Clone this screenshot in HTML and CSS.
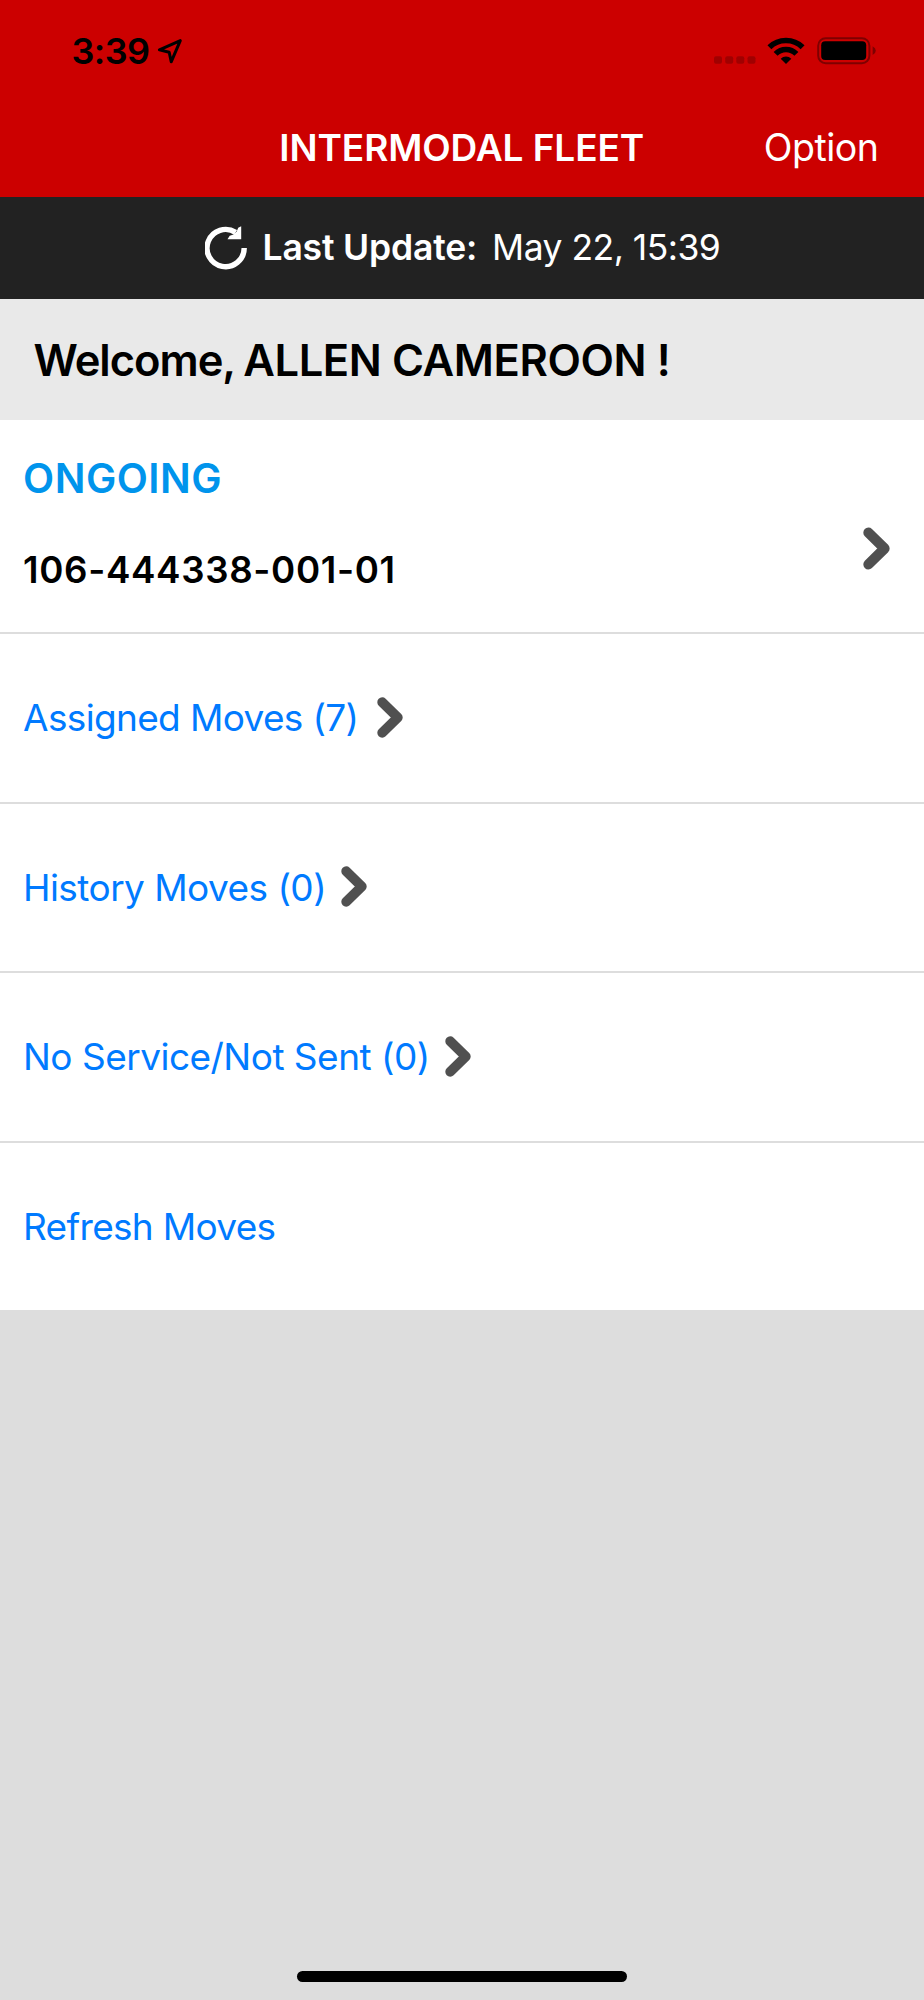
FILE: index.html
```html
<!DOCTYPE html>
<html lang="en">
<head>
<meta charset="utf-8">
<title>Intermodal Fleet</title>
<link rel="stylesheet" href="styles.css">
</head>
<body>
<main class="screen">
  <div class="status">
    <div class="status-left">
      <span class="time">3:39</span>
      <svg class="location" width="26" height="26" viewBox="0 0 26 26"><path d="M23.3 2.6L2.4 11.9L12.2 14.3L14.2 23.8Z" fill="none" stroke="#000" stroke-width="3" stroke-linejoin="round"/></svg>
    </div>
    <div class="status-right">
      <svg class="signal" width="42" height="8" viewBox="0 0 42 8" fill="#a00000"><rect x="0" y="0.3" width="8" height="7.4" rx="2"/><rect x="11.2" y="0.3" width="8" height="7.4" rx="2"/><rect x="22.3" y="0.3" width="8" height="7.4" rx="2"/><rect x="33.5" y="0.3" width="8" height="7.4" rx="2"/></svg>
      <svg class="wifi" width="38" height="28" viewBox="0 0 38 28"><g fill="none" stroke="#000" stroke-width="5.6"><path d="M2.4 10.2A23.8 23.8 0 0 1 35.6 10.2"/><path d="M8.6 16.9A14.6 14.6 0 0 1 29.4 16.9"/></g><path d="M19 27L13.7 21.7A7.5 7.5 0 0 1 24.3 21.7Z"/></svg>
      <svg class="battery" width="60" height="28" viewBox="0 0 60 28"><rect x="1.2" y="1.2" width="51.2" height="25" rx="7.5" fill="none" stroke="#7e0000" stroke-width="2"/><rect x="4.2" y="4.3" width="45" height="18.8" rx="4"/><path d="M55.6 9.3Q58.8 11 58.8 13.7T55.6 18.1Z" fill="#7e0000"/></svg>
    </div>
  </div>
  <header class="nav">
    <span></span>
    <h1 class="title">INTERMODAL FLEET</h1>
    <span class="option">Option</span>
  </header>
  <div class="update">
    <svg class="reload" width="43" height="44" viewBox="0 0 43 44"><path d="M39.2 22.1A18.6 18.6 0 1 1 30.6 6.4" fill="none" stroke="#fff" stroke-width="5.4"/><path d="M36.2 0.2V13.3H22.5L24.7 9.8L28.5 8.6L31.7 5.4L33.2 1.8Z" fill="#fff"/></svg>
    <span class="update-label">Last Update:</span>
    <span class="update-value">May 22, 15:39</span>
  </div>
  <div class="welcome"><span class="greeting">Welcome,</span><span class="name">ALLEN CAMEROON !</span></div>
  <section class="ongoing">
    <div class="ongoing-text">
      <div class="ongoing-title">ONGOING</div>
      <div class="ongoing-number">106-444338-001-01</div>
    </div>
    <svg class="chevron" width="28" height="43" viewBox="0 0 27 41"><path d="M5.2 5.2L20.8 20.5L5.2 35.8" fill="none" stroke="#505050" stroke-width="9.8" stroke-linecap="round" stroke-linejoin="round"/></svg>
  </section>
  <nav class="list">
    <a class="row"><span class="assigned">Assigned Moves (7)</span><svg class="chevron" width="27" height="41" viewBox="0 0 27 41"><path d="M5.2 5.2L20.8 20.5L5.2 35.8" fill="none" stroke="#505050" stroke-width="9.8" stroke-linecap="round" stroke-linejoin="round"/></svg></a>
    <a class="row"><span class="history">History Moves (0)</span><svg class="chevron" width="27" height="41" viewBox="0 0 27 41"><path d="M5.2 5.2L20.8 20.5L5.2 35.8" fill="none" stroke="#505050" stroke-width="9.8" stroke-linecap="round" stroke-linejoin="round"/></svg></a>
    <a class="row"><span class="unsent">No Service/Not Sent (0)</span><svg class="chevron" width="27" height="41" viewBox="0 0 27 41"><path d="M5.2 5.2L20.8 20.5L5.2 35.8" fill="none" stroke="#505050" stroke-width="9.8" stroke-linecap="round" stroke-linejoin="round"/></svg></a>
    <a class="row"><span class="refresh">Refresh Moves</span></a>
  </nav>
  <div class="home"></div>
</main>
</body>
</html>
```
FILE: styles.css
```css
* { box-sizing: border-box; }
body { margin: 0; font-family: Inter, "Liberation Sans", sans-serif; color: #000; }
svg { display: block; flex: none; }
span, a, h1 { white-space: nowrap; }

.screen { display: flex; flex-direction: column; width: 924px; height: 2000px; background: #ddd; overflow: hidden; }

.status { display: flex; justify-content: space-between; align-items: center; height: 98px; padding: 4px 47px 0 71.5px; background: #c00; }
.status-left, .status-right { display: flex; align-items: center; }
.time { font-size: 36px; font-weight: 600; letter-spacing: -0.6px; }
.location { margin: -1px 0 0 7.5px; }
.signal { margin: 17px 11px 0 0; }
.wifi { margin-right: 12px; }

.nav { display: grid; grid-template-columns: 1fr auto 1fr; align-items: center; height: 98.5px; padding: 0 45.5px 0 45px; background: #c00; color: #fff; }
.title { margin: 0; font-size: 37px; font-weight: 600; letter-spacing: -0.08px; }
.option { justify-self: end; font-size: 37.5px; font-weight: 400; letter-spacing: -0.49px; }

.update { display: flex; align-items: center; height: 102.5px; padding-left: 205px; background: #222; color: #fff; font-size: 35.5px; }
.update-label { margin-left: 14.5px; font-weight: 600; letter-spacing: -0.18px; }
.update-value { margin-left: 15px; letter-spacing: -0.53px; }

.welcome { display: flex; align-items: center; gap: 8px; height: 121px; padding-left: 33.5px; background: #e9e9e9; font-size: 43.5px; font-weight: 600; }
.greeting { letter-spacing: -1.02px; }
.name { letter-spacing: -0.4px; }

.ongoing { display: flex; justify-content: space-between; align-items: center; height: 214px; padding: 0 33px 0 23px; background: #fff; border-bottom: 2px solid #ddd; }
.ongoing-text { display: flex; flex-direction: column; gap: 41px; padding-bottom: 4px; line-height: 50px; font-weight: 600; }
.ongoing-title { font-size: 40.5px; letter-spacing: 0.5px; color: #0094ec; }
.ongoing-number { font-size: 36.7px; letter-spacing: 0.66px; }
.ongoing .chevron { margin-top: 44px; }

.list { display: flex; flex-direction: column; background: #fff; }
.row { display: flex; align-items: center; gap: 19px; height: 169.5px; padding: 0 0 0 23px; border-bottom: 2px solid #ddd; color: #007aff; font-size: 37px; }
.row:last-child { height: 167.5px; border-bottom: 0; }
.row .chevron { margin-top: -1px; }
.assigned { letter-spacing: -0.65px; }
.history { margin-right: -4px; letter-spacing: -0.55px; }
.unsent { margin-right: -4px; letter-spacing: -0.52px; }
.refresh { letter-spacing: -0.68px; }

.home { width: 330px; height: 11px; margin: auto auto 18px 297px; border-radius: 6px; background: #000; }
```
